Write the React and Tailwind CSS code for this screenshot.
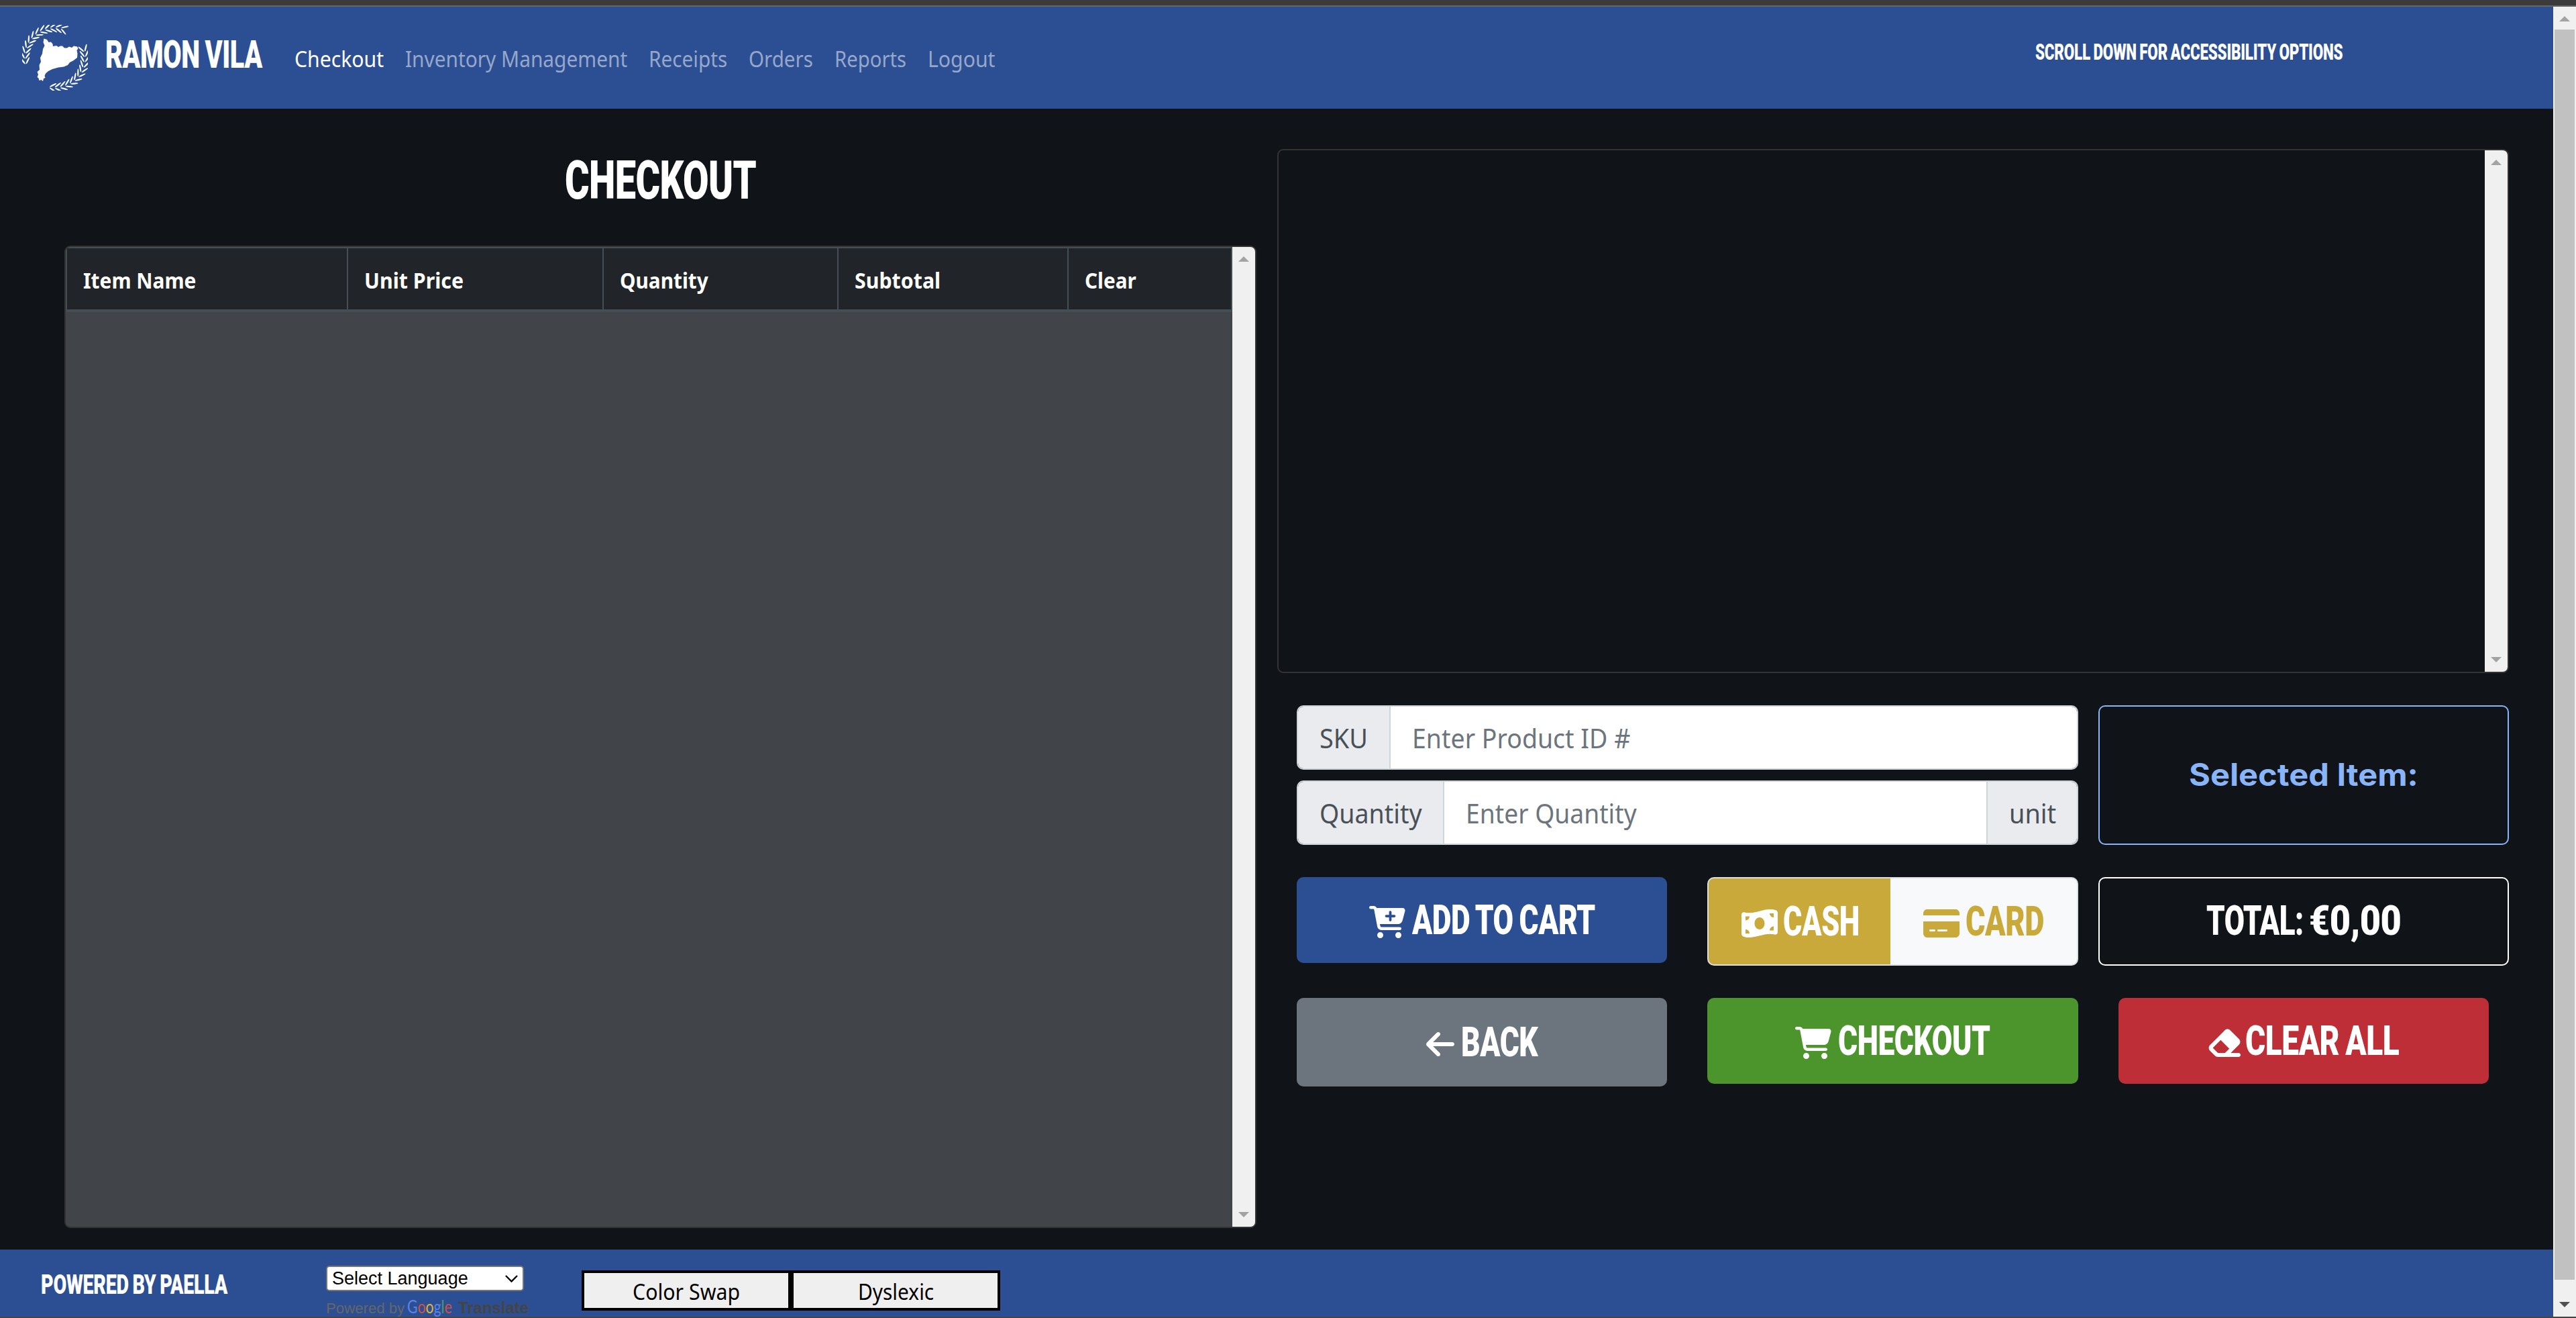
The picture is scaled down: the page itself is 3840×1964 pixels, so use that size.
import { useLayoutEffect, useRef, useState } from "react";
import {
  FaArrowLeft,
  FaCartPlus,
  FaCartShopping,
  FaCreditCard,
  FaEraser,
  FaMoneyBillWave,
} from "react-icons/fa6";

/* One line of text squeezed or stretched so that it is exactly `w` pixels wide. */
function Fit({ w, className = "", children }) {
  const ref = useRef(null);
  const [scale, setScale] = useState(1);
  useLayoutEffect(() => {
    setScale(w / ref.current.offsetWidth);
  }, [w, children]);
  return (
    <span className={"block shrink-0 " + className} style={{ width: w }}>
      <span
        ref={ref}
        className="inline-block origin-left whitespace-nowrap"
        style={{ transform: `scaleX(${scale})` }}
      >
        {children}
      </span>
    </span>
  );
}

const DISPLAY =
  "font-['Roboto','Liberation_Sans',sans-serif] font-black leading-none tracking-[-0.01em] [word-spacing:-0.04em]";
const BODY = "font-['Noto_Sans','Open_Sans',sans-serif] leading-none";

function Leaves({ from, to, count, flip }) {
  const items = [];
  for (let i = 0; i < count; i++) {
    const a = from + ((to - from) * i) / (count - 1);
    const rad = (a * Math.PI) / 180;
    for (const side of [-1, 1]) {
      const r = 44.5 + side * 3.6;
      const x = 49 + r * Math.cos(rad);
      const y = 49 + r * Math.sin(rad);
      const rot = a + 90 + flip * side * 32;
      items.push(
        <ellipse
          key={i + "-" + side}
          cx={x}
          cy={y}
          rx="5.6"
          ry="1.1"
          transform={`rotate(${rot} ${x} ${y})`}
        />
      );
    }
  }
  return items;
}

function Logo() {
  return (
    <svg className="h-[98px] w-[98px]" viewBox="0 0 98 98" fill="#fff">
      <Leaves from={174} to={288} count={12} flip={-1} />
      <Leaves from={-18} to={94} count={12} flip={1} />
      <path d="M32.500 20.500L37 22L39.500 26L43 25.500L45.500 28.500L46 32L51 31L54 33L57 31.500L60 31.500L63 34.500L67 34.500L70 32.500L74 34L77 31.500L82 32.500L83.500 35.500L81.500 38L82.500 43L82 49L76 53.500L71 56L68 60L62 62.500L54 63.500L45 66L39 69L35 72.500L33.500 76L34.500 79L32 80L31 84L28.500 82L25.500 83L24.500 79.500L22.500 78L24 74L22.500 70L26 67L25.500 60L28 55L27 49L30 43L31 36L33.500 31L31.500 26Z" />
    </svg>
  );
}

function Arrow({ down, dark }) {
  return (
    <svg
      className={"block h-2 w-4 " + (dark ? "fill-[#505050]" : "fill-[#a3a3a3]")}
      viewBox="0 0 16 8"
    >
      <path d={down ? "M0 0H16L8 8z" : "M0 8H16L8 0z"} />
    </svg>
  );
}

function InnerScrollbar() {
  return (
    <div className="flex w-[34px] shrink-0 flex-col items-center justify-between bg-[#f0f0f0] py-[14px]">
      <Arrow />
      <Arrow down />
    </div>
  );
}

const links = [
  ["Checkout", 133, "text-white"],
  ["Inventory Management", 331, "text-[#96a7ca]"],
  ["Receipts", 117, "text-[#96a7ca]"],
  ["Orders", 96, "text-[#96a7ca]"],
  ["Reports", 107, "text-[#96a7ca]"],
  ["Logout", 101, "text-[#96a7ca]"],
];

function Navbar() {
  return (
    <nav className="flex h-[152px] shrink-0 bg-[#2c4f94]">
      <div className="mt-[27px] ml-[33px]">
        <Logo />
      </div>
      <Fit w={234} className={DISPLAY + " mt-[42px] ml-[26px] text-[58px] text-white"}>
        RAMON VILA
      </Fit>
      <div className="mt-[62px] ml-[48px] flex gap-[32px]">
        {links.map(([t, w, c]) => (
          <Fit key={t} w={w} className={BODY + " text-[32px] " + c}>
            {t}
          </Fit>
        ))}
      </div>
      <Fit w={458} className={DISPLAY + " mt-[51px] mr-[314px] ml-auto text-[33px] text-white"}>
        SCROLL DOWN FOR ACCESSIBILITY OPTIONS
      </Fit>
    </nav>
  );
}

const columns = [
  ["Item Name", 168, "w-[421px] border-l-2"],
  ["Unit Price", 148, "w-[381px]"],
  ["Quantity", 132, "w-[350px]"],
  ["Subtotal", 128, "w-[343px]"],
  ["Clear", 77, "w-[244px]"],
];

function CartTable() {
  return (
    <section className="flex w-[1777px] shrink-0 flex-col">
      <div className="flex h-[204px] justify-center pt-[68px]">
        <Fit w={285} className={DISPLAY + " text-[79px] text-white"}>
          CHECKOUT
        </Fit>
      </div>
      <div className="flex h-[1464px] overflow-hidden rounded-[9px] border-2 border-[#333] bg-[#414448]">
        <div className="w-[1739px]">
          <div className="flex h-[97px] border-t-2 border-b-4 border-[#454d55] bg-[#212529]">
            {columns.map(([t, w, c]) => (
              <div
                key={t}
                className={"flex shrink-0 items-center border-r-2 border-[#454d55] pl-[24px] " + c}
              >
                <Fit w={w} className={BODY + " mt-[4px] text-[32px] font-bold text-white"}>
                  {t}
                </Fit>
              </div>
            ))}
          </div>
        </div>
        <InnerScrollbar />
      </div>
    </section>
  );
}

function Addon({ w, className, children }) {
  return (
    <div className={"flex items-center border-[#ced4da] bg-[#e9ebef] pl-[32px] " + className}>
      <Fit w={w} className={BODY + " mt-[2px] text-[40px] text-[#495057]"}>
        {children}
      </Fit>
    </div>
  );
}

function Placeholder({ w, children }) {
  return (
    <div className="flex flex-1 items-center bg-white pl-[32px]">
      <Fit w={w} className={BODY + " mt-[2px] text-[40px] text-[#6c757d]"}>
        {children}
      </Fit>
    </div>
  );
}

const GROUP = "flex h-[96px] overflow-hidden rounded-[10px] border-2 border-[#ced4da]";
const BTN = "flex shrink-0 items-center rounded-[10px] ";
const LABEL = DISPLAY + " text-[62px]";

function Controls() {
  return (
    <div className="mt-[48px] flex flex-col gap-[48px]">
      <div className="flex h-[208px] justify-between pl-[29px]">
        <div className="flex w-[1165px] flex-col gap-4">
          <div className={GROUP}>
            <Addon w={72} className="w-[138px] border-r-2">
              SKU
            </Addon>
            <Placeholder w={325}>Enter Product ID #</Placeholder>
          </div>
          <div className={GROUP}>
            <Addon w={153} className="w-[218px] border-r-2">
              Quantity
            </Addon>
            <Placeholder w={255}>Enter Quantity</Placeholder>
            <Addon w={70} className="w-[135px] border-l-2">
              unit
            </Addon>
          </div>
        </div>
        <div className="flex w-[612px] items-center justify-center rounded-[10px] border-2 border-[#8ab4f8]">
          <Fit
            w={342}
            className="-mt-[2px] font-['Inter','Roboto',sans-serif] text-[46px] leading-none font-bold text-[#8ab4f8]"
          >
            Selected Item:
          </Fit>
        </div>
      </div>

      <div className="flex h-[132px] items-start pl-[29px] text-white">
        <div className={BTN + "h-[128px] w-[552px] bg-[#2c4f94] pl-[108px]"}>
          <FaCartPlus className="mt-[6px] size-[54px] shrink-0" />
          <Fit w={273} className={LABEL + " ml-[10px]"}>
            ADD TO CART
          </Fit>
        </div>
        <div className="ml-[60px] flex h-[132px] w-[553px] shrink-0 overflow-hidden rounded-[10px] border-2 border-[#dcdee1] bg-[#f8f9fa]">
          <div className="flex w-[271px] items-center bg-[#c8a93a] pl-[49px]">
            <FaMoneyBillWave className="mt-[6px] size-[54px] shrink-0" />
            <Fit w={114} className={LABEL + " ml-[8px]"}>
              CASH
            </Fit>
          </div>
          <div className="flex flex-1 items-center pl-[49px] text-[#c8a93a]">
            <FaCreditCard className="mt-[6px] size-[54px] shrink-0" />
            <Fit w={117} className={LABEL + " ml-[9px]"}>
              CARD
            </Fit>
          </div>
        </div>
        <div className="ml-[30px] flex h-[132px] w-[612px] shrink-0 items-center justify-center gap-[8px] rounded-[10px] border-2 border-white">
          <Fit w={145} className={LABEL + " -mt-[3px]"}>
            TOTAL:
          </Fit>
          <Fit w={137} className={LABEL + " -mt-[3px]"}>
            €0,00
          </Fit>
        </div>
      </div>

      <div className="flex h-[132px] items-start pl-[29px] text-white">
        <div className={BTN + "h-[132px] w-[552px] bg-[#6c757d] pl-[193px]"}>
          <FaArrowLeft className="mt-[6px] h-[48px] w-[42px] shrink-0" />
          <Fit w={114} className={LABEL + " ml-[10px]"}>
            BACK
          </Fit>
        </div>
        <div className={BTN + "ml-[60px] h-[128px] w-[553px] bg-[#4c942c] pl-[131px]"}>
          <FaCartShopping className="mt-[6px] size-[54px] shrink-0" />
          <Fit w={227} className={LABEL + " ml-[10px]"}>
            CHECKOUT
          </Fit>
        </div>
        <div className={BTN + "ml-[60px] h-[128px] w-[552px] bg-[#be2e37] pl-[131px]"}>
          <FaEraser className="mt-[6px] size-[54px] shrink-0" />
          <Fit w={229} className={LABEL + " ml-[4px]"}>
            CLEAR ALL
          </Fit>
        </div>
      </div>
    </div>
  );
}

function Footer() {
  return (
    <footer className="flex h-[100px] shrink-0 overflow-hidden bg-[#2c4f94]">
      <Fit w={278} className={DISPLAY + " mt-[33px] ml-[61px] text-[40px] text-white"}>
        POWERED BY PAELLA
      </Fit>
      <div className="mt-[24px] ml-[147px] flex w-[320px] flex-col font-['Liberation_Sans',Arial,sans-serif] leading-none">
        <div className="flex h-[38px] w-[295px] items-center justify-between rounded-[5px] border-2 border-[#767676] bg-white pr-[7px] pl-[7px] text-[27px] text-black">
          <Fit w={203}>Select Language</Fit>
          <svg className="h-[11px] w-[19px]" viewBox="0 0 19 11" fill="none" stroke="#000" strokeWidth="2.4">
            <path d="M1 1l8.500 8.500L18 1" />
          </svg>
        </div>
        <div className="mt-[14px] flex items-center text-[22px] whitespace-nowrap text-[#666]">
          <Fit w={117}>Powered by</Fit>
          <Fit w={67} className="-mt-[6px] ml-[4px] font-['Lato','Inter',sans-serif] text-[26px]">
            <span className="text-[#5a83e6]">G</span>
            <span className="text-[#d04f45]">o</span>
            <span className="text-[#e0b437]">o</span>
            <span className="text-[#5a83e6]">g</span>
            <span className="text-[#4b9a62]">l</span>
            <span className="text-[#d04f45]">e</span>
          </Fit>
          <Fit w={105} className="ml-[9px] text-[23px] font-bold text-[#444]">
            Translate
          </Fit>
        </div>
      </div>
      <div className={"mt-[31px] ml-[61px] flex h-[60px] text-[32px] text-black " + BODY}>
        <div className="flex w-[312px] items-center justify-center border-4 border-black bg-[#efefef]">
          <Fit w={160} className="mt-[3px]">
            Color Swap
          </Fit>
        </div>
        <div className="flex w-[312px] items-center justify-center border-4 border-black bg-[#efefef]">
          <Fit w={113} className="mt-[3px]">
            Dyslexic
          </Fit>
        </div>
      </div>
    </footer>
  );
}

export default function App() {
  return (
    <div className="flex h-[1964px] w-[3840px] flex-col overflow-hidden border-b-2 border-[#444] bg-[#101317]">
      <div className="h-[10px] shrink-0 border-b-2 border-[#666] bg-[#3b3b3b]" />
      <div className="flex flex-1">
        <div className="flex w-[3806px] flex-col">
          <Navbar />
          <main className="flex h-[1700px] pl-[96px]">
            <CartTable />
            <section className="ml-[31px] w-[1836px] pt-[60px]">
              <div className="flex h-[781px] justify-end overflow-hidden rounded-[9px] border-2 border-[#333]">
                <InnerScrollbar />
              </div>
              <Controls />
            </section>
          </main>
          <Footer />
        </div>
        <div className="flex w-[34px] flex-col items-center bg-[#f0f0f0] pt-[14px] pb-[14px]">
          <Arrow />
          <div className="mt-[12px] mb-[33px] w-[30px] flex-1 bg-[#c1c1c1]" />
          <Arrow down dark />
        </div>
      </div>
    </div>
  );
}
